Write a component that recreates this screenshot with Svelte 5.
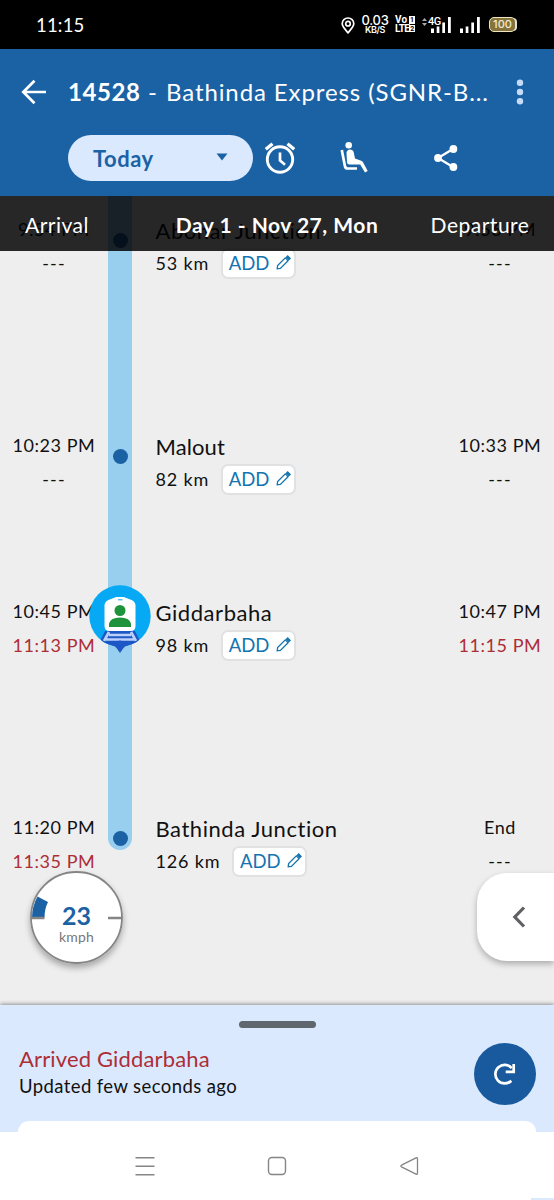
<script>
  const stops = [
    { name: 'Abohar Junction', km: '53 km', arr: '9:54 PM', dep: '9:56 PM', height: 216 },
    { name: 'Malout', km: '82 km', arr: '10:23 PM', dep: '10:33 PM', height: 166 },
    { name: 'Giddarbaha', km: '98 km', arr: '10:45 PM', dep: '10:47 PM', arrLate: '11:13 PM', depLate: '11:15 PM', here: true, height: 216 },
    { name: 'Bathinda Junction', km: '126 km', arr: '11:20 PM', dep: 'End', arrLate: '11:35 PM', last: true, height: 39 }
  ];
</script>

{#snippet time(text, late)}
  <div class="line"><span class="time" class:late class:dashes={text === '---'}>{text}</span></div>
{/snippet}

<div class="phone">
  <div class="status">
    <span class="clock">11:15</span>
    <svg class="pin" width="14" height="18" viewBox="0 0 14 18" fill="none" stroke="#fff" stroke-width="1.7"><path d="M7 15.8C4 12 1.2 9.5 1.2 6.8a5.8 5.8 0 0 1 11.6 0C12.800 9.500 10 12 7 15.800Z" /><circle cx="7" cy="6.700" r="2.300" /></svg>
    <span class="rate"><b>0.03</b><i>KB/S</i></span>
    <span class="volte"><span>Vo<em>1</em></span><span>LTE<em>2</em></span></span>
    <span class="net">
      <svg width="5" height="8" viewBox="0 0 5 8" fill="#aaa"><path d="M0 3 2.500 0 5 3ZM0 5h5L2.500 8Z" /></svg><span>4G</span>
    </span>
    <svg class="bars first" width="20" height="16" viewBox="0 0 20 16" fill="#fff"><path d="M0 11.500h3V16H0zM5.700 9.500h2.700V16H5.700zM11.300 5.500H14V16h-2.700zM17 0h2.800v16H17z" /></svg>
    <svg class="bars" width="20" height="16" viewBox="0 0 20 16" fill="#fff"><path d="M0 11.500h3V16H0zM5.700 9.500h2.700V16H5.700zM11.300 5.500H14V16h-2.700zM17 0h2.800v16H17z" /></svg>
    <span class="battery">100</span>
  </div>

  <header>
    <div class="title-row">
      <svg class="back" width="26" height="26" viewBox="0 0 26 26" fill="none" stroke="#fff" stroke-width="2.700"><path d="M25 13H2.500M13.500 1.800 2.300 13l11.200 11.200" /></svg>
      <h1><b>14528</b><span class="hyphen">-</span><span>Bathinda Express (SGNR-B...</span></h1>
      <svg class="more" width="8" height="26" viewBox="0 0 8 26" fill="#c5dcf8"><circle cx="4" cy="3.800" r="3.200" /><circle cx="4" cy="13" r="3.200" /><circle cx="4" cy="22.200" r="3.200" /></svg>
    </div>
    <div class="tools">
      <button class="day"><span>Today</span><svg width="12" height="8" viewBox="0 0 12 8" fill="#1b62a5"><path d="M.5.500h11L6 7.500Z" /></svg></button>
      <svg class="alarm" width="32" height="34" viewBox="0 0 32 34" fill="none" stroke="#fff"><circle cx="16" cy="18.500" r="12.700" stroke-width="2.900" /><path d="M16 11.500v8l5 4.300" stroke-width="2.700" /><path d="M1.800 8.300 8.500 2.700M30.200 8.300 23.500 2.700" stroke-width="3.300" /></svg>
      <svg class="seat" width="28" height="31" viewBox="0 0 28 31"><circle cx="8.700" cy="3.300" r="3.300" fill="#fff" /><path d="M6.500 11c0-4.600 6.500-4.600 7.200-.8l1.300 6.300 6.200 2.200c1.300.5 1.700 1.200 2.200 2.200l4.300 8-2.700 1.600-4.800-8.100H9.500c-1.700 0-2.500-1-2.500-2.600Z" fill="#fff" /><path d="M1.800 8 5 24.500q.6 2 2.500 2H17" fill="none" stroke="#fff" stroke-width="2.700" /></svg>
      <svg class="share" width="24" height="26" viewBox="0 0 24 26" fill="#fff"><path d="M19 4 4 13l15 9" fill="none" stroke="#fff" stroke-width="2.300" /><circle cx="19.400" cy="4" r="3.900" /><circle cx="4" cy="13" r="3.900" /><circle cx="19.400" cy="22" r="3.900" /></svg>
    </div>
  </header>

  <main>
    {#each stops as s, i}
      <section class:first={i === 0} style:height="{s.height + (i === 0 ? 17 : 0)}px">
        <div class="side">{@render time(s.arr, false)}{@render time(s.arrLate ?? '---', !!s.arrLate)}</div>
        <div class="rail" class:end={s.last}>
          {#if s.here}
            <svg class="train" width="62" height="70" viewBox="0 0 62 70">
              <defs><clipPath id="disc"><circle cx="31" cy="31" r="30.700" /></clipPath></defs>
              <circle cx="31" cy="31" r="30.700" fill="#07a9f4" />
              <g clip-path="url(#disc)"><path d="M16 46h30l12 24H4Z" fill="#1d57c5" /><path d="m20 47-5 9M42 47l5 9M20 50h22M17 54.500h28" fill="none" stroke="#bbd1fa" stroke-width="2.600" /></g>
              <path d="M13 55.500q9 3 18 0 9 3 18 0-4 3.500-10 4.500-3 1-4.500 3L31 68l-3.500-5q-1.500-2-4.500-3-6-1-10-4.500Z" fill="#1d57c5" />
              <path d="M22 14q4-1.500 5-2h8q1 .5 5 2 6 1.500 6.500 6v21q0 5-5 5h-21q-5 0-5-5V20q.5-4.500 6.500-6Z" fill="#fff" /><path d="M29 14.800h4.500" stroke="#07a9f4" stroke-width="1" />
              <circle cx="31" cy="25.500" r="5.500" fill="#1e933c" /><path d="M20 42v-3.500q1.500-6 11-6t11 6V42Z" fill="#1e933c" />
            </svg>
          {:else}<i class="dot"></i>{/if}
        </div>
        <div class="station">
          <div class="line"><span class="name" class:short={i === 1}>{s.name}</span></div>
          <div class="line info"><span class="km">{s.km}</span>
            <button class="add"><span>ADD</span><svg width="15" height="15" viewBox="0 0 15 15" fill="none" stroke="#1474af" stroke-width="1.300"><path d="m1.200 13.800.4-3.200 7.700-7.700 2.800 2.800-7.700 7.700Z" /><path d="m10.500 2.200 1.200-1.200 2.400 2.400-1.200 1.200Z" fill="#1474af" /></svg></button>
          </div>
        </div>
        <div class="side">{@render time(s.dep, false)}{@render time(s.depLate ?? '---', !!s.depLate)}</div>
      </section>
    {/each}

    <div class="columns"><span class="h-arr">Arrival</span><b>Day 1 - Nov 27, Mon</b><span class="h-dep">Departure</span></div>

    <div class="speed">
      <svg width="93" height="93" viewBox="0 0 93 93"><circle cx="46.500" cy="46.500" r="45.500" fill="#fff" stroke="#858585" stroke-width="1.800" /><path d="M2 46.500A45 45 0 0 1 7.500 25.500L18 31q-3.500 7-3.500 15.500Z" fill="#1b62a5" /><path d="M1 47h13.500M78 47h14" stroke="#858585" stroke-width="2.700" /></svg>
      <div class="reading"><b>23</b><span>kmph</span></div>
    </div>
    <div class="drawer"><svg width="14" height="22" viewBox="0 0 14 22" fill="none" stroke="#5f6063" stroke-width="3.200"><path d="M12 1.500 2.800 11l9.200 9.500" /></svg></div>
  </main>

  <footer>
    <div class="handle"></div>
    <div class="summary">
      <div><p class="arrived">Arrived Giddarbaha</p><p class="updated">Updated few seconds ago</p></div>
      <button class="refresh" aria-label="Refresh"><svg width="24" height="24" viewBox="0 0 24 24" fill="none" stroke="#fff" stroke-width="2.700"><path d="M18.300 18.700A9.300 9.300 0 1 1 18.800 6.200" /><path d="M20.700 2v7.800h-8" /></svg></button>
    </div>
    <div class="card"></div>
  </footer>

  <nav>
    <svg width="20" height="20" viewBox="0 0 20 20" stroke="#858585" stroke-width="1.400"><path d="M.5 1.700h19M.5 10.200h19M.5 18.700h19" /></svg>
    <svg width="20" height="20" viewBox="0 0 20 20" fill="none" stroke="#858585" stroke-width="1.400"><rect x="1.500" y="1.500" width="17" height="17" rx="3.500" /></svg>
    <svg width="20" height="20" viewBox="0 0 20 20" fill="none" stroke="#858585" stroke-width="1.300"><path d="M17 1.900 2.500 9.200q-1.500.8 0 1.600L17 18.100q1.500.6 1.500-1V2.900q0-1.600-1.500-1Z" /></svg>
  </nav>
</div>

<style>
  :global(body) { margin: 0; }
  * { box-sizing: border-box; }
  .phone { width: 554px; height: 1200px; overflow: hidden; font-family: Lato, "Noto Sans", sans-serif; color: #111; display: flex; flex-direction: column; background: #fff; }
  button { border: 0; padding: 0; font: inherit; }
  svg { display: block; flex: none; }
  p, h1 { margin: 0; }
  span, b { white-space: nowrap; }

  .status { height: 49px; flex: none; background: #000; color: #fff; display: flex; align-items: center; padding-left: 36px; }
  .clock { width: 306px; font-size: 18.500px; letter-spacing: .2px; }
  .pin { margin: 2px 0 0 -1px; }
  .rate { width: 28px; margin-left: 6px; display: flex; flex-direction: column; align-items: center; }
  .rate b { font: 500 13px/11px Inter, sans-serif; letter-spacing: -.3px; }
  .rate i { font: 600 9px/8px Inter, sans-serif; letter-spacing: -.4px; }
  .volte { margin-left: 6px; width: 20px; font: 700 10px/8.500px Roboto, sans-serif; display: flex; flex-direction: column; }
  .volte span { display: flex; justify-content: space-between; letter-spacing: -.6px; }
  .volte span:first-child { letter-spacing: .2px; }
  .volte em { background: #fff; color: #000; width: 6px; height: 7.500px; font: 700 7px/8px Roboto, sans-serif; text-align: center; letter-spacing: 0; }
  .net { display: flex; margin-left: 7px; height: 16px; width: 9px; }
  .net span { font: 500 11px/10px Roboto, sans-serif; letter-spacing: -.5px; margin-left: 1px; }
  .net svg { margin-top: 1px; }
  .bars { margin-left: 9px; }
  .bars.first { margin-left: 0; }
  .battery { margin-left: 9px; width: 27px; height: 15px; border: 1px solid #eee4c2; border-radius: 5px; background: #84733a; font: 500 11px/13px Inter, sans-serif; text-align: center; box-shadow: 2px 0 0 -1px #ddd; color: #f4ecd4; }

  header { height: 147px; flex: none; background: #1b62a5; color: #fff; padding-top: 23px; }
  .title-row { height: 40px; display: flex; align-items: center; padding-left: 21px; }
  h1 { width: 424px; margin-left: 21px; font-size: 24px; font-weight: 400; line-height: 40px; display: flex; }
  h1 b { letter-spacing: .6px; width: 80px; }
  h1 span { letter-spacing: .9px; }
  h1 .hyphen { width: 18px; }
  .more { margin-left: 24px; }
  .tools { display: flex; align-items: center; height: 46px; margin-top: 23px; padding-left: 68px; }
  .day { width: 185px; height: 46px; border-radius: 23px; background: #dbe9fe; color: #1b62a5; display: flex; justify-content: space-between; align-items: center; padding: 1px 25px 0 25px; font-size: 22px; font-weight: 700; letter-spacing: .5px; }
  .day svg { margin-top: -3px; }
  .alarm { margin-left: 11px; }
  .seat { margin-left: 44px; margin-top: -1px; }
  .share { margin-left: 66px; }

  main { position: relative; height: 809px; flex: none; background: #eee; overflow: hidden; }
  section { display: grid; grid-template-columns: 108px 24px 314px 108px; }
  section.first > .side, section.first > .station { padding-top: 17px; }
  .line { height: 34px; display: flex; align-items: center; }
  .side .line { justify-content: center; padding-bottom: 2px; }
  .time { font-size: 18px; letter-spacing: .55px; }
  .late { color: #ad2d36; }
  .dashes { letter-spacing: 1.200px; }
  .rail { background: #98cfef; display: flex; flex-direction: column; align-items: center; padding-top: 20px; }
  .first .rail { padding-top: 37px; }
  .rail.end { border-radius: 0 0 12px 12px; padding-top: 20px; height: 39px; }
  .dot { width: 15px; height: 15px; border-radius: 50%; background: #1b62a5; flex: none; }
  .train { margin-top: -30px; position: relative; z-index: 1; }
  .station { padding-left: 23.500px; }
  .name { font-size: 22px; padding-top: 1px; letter-spacing: .55px; }
  .name.short { letter-spacing: .1px; }
  .info { padding-bottom: 2px; }
  .km { font-size: 18px; letter-spacing: .85px; }
  .add { height: 31px; width: 75px; margin-left: 11.500px; border: 2px solid #e0e1e3; border-radius: 7px; background: #fff; display: flex; align-items: center; justify-content: space-between; padding: 0 3px 0 6px; color: #1474af; font-size: 18.500px; }
  .add svg { margin-top: -2px; }

  .columns { position: absolute; left: 0; right: 0; top: 0; height: 55px; background: rgba(0, 0, 0, .84); color: #fff; display: grid; grid-template-columns: 126px 302px 104px; justify-content: start; padding-top: 2px; align-items: center; text-align: center; font-size: 21px; }
  .columns span { letter-spacing: .5px; }
  .h-arr { padding-right: 12px; }
  .columns b { font-size: 21px; letter-spacing: .5px; }
  .speed { position: absolute; left: 30px; top: 675px; width: 93px; height: 93px; border-radius: 50%; box-shadow: 0 4px 6px rgba(0, 0, 0, .3); }
  .reading { position: absolute; inset: 31px 0 auto; display: flex; flex-direction: column; align-items: center; color: #777; font-size: 14px; line-height: 15px; }
  .reading b { font-size: 25px; line-height: 27px; color: #1b62a5; }
  .reading span { letter-spacing: .2px; }
  .drawer { position: absolute; right: 0; top: 677px; width: 77px; height: 88px; border-radius: 30px 0 0 30px; background: #fff; box-shadow: 0 3px 6px rgba(0, 0, 0, .28); display: flex; align-items: center; padding-left: 35px; }

  footer { height: 127px; flex: none; background: #dbe9fe; box-shadow: 0 -1px 4px rgba(0, 0, 0, .4); position: relative; padding-top: 16px; display: flex; flex-direction: column; }
  .handle { width: 77px; height: 7px; border-radius: 4px; background: #5f666e; margin: 0 auto; flex: none; }
  .summary { display: flex; justify-content: space-between; padding: 15px 18px 0 19px; height: 93px; }
  .arrived { font-size: 22px; line-height: 28px; margin-top: 2px; letter-spacing: .15px; color: #ad2d36; }
  .updated { font-size: 18.500px; line-height: 26px; letter-spacing: .4px; }
  .refresh { width: 62px; height: 62px; border-radius: 50%; background: #185a9d; display: grid; place-items: center; }
  .card { height: 11px; flex: none; margin: 0 18px; border-radius: 11px 11px 0 0; background: #fff; }
  nav { height: 68px; flex: none; position: relative; background: linear-gradient(#dbe9fe, #dbe9fe) right bottom / 23px 2px no-repeat #fff; display: flex; justify-content: space-between; padding: 24px 135px 0; }
</style>
